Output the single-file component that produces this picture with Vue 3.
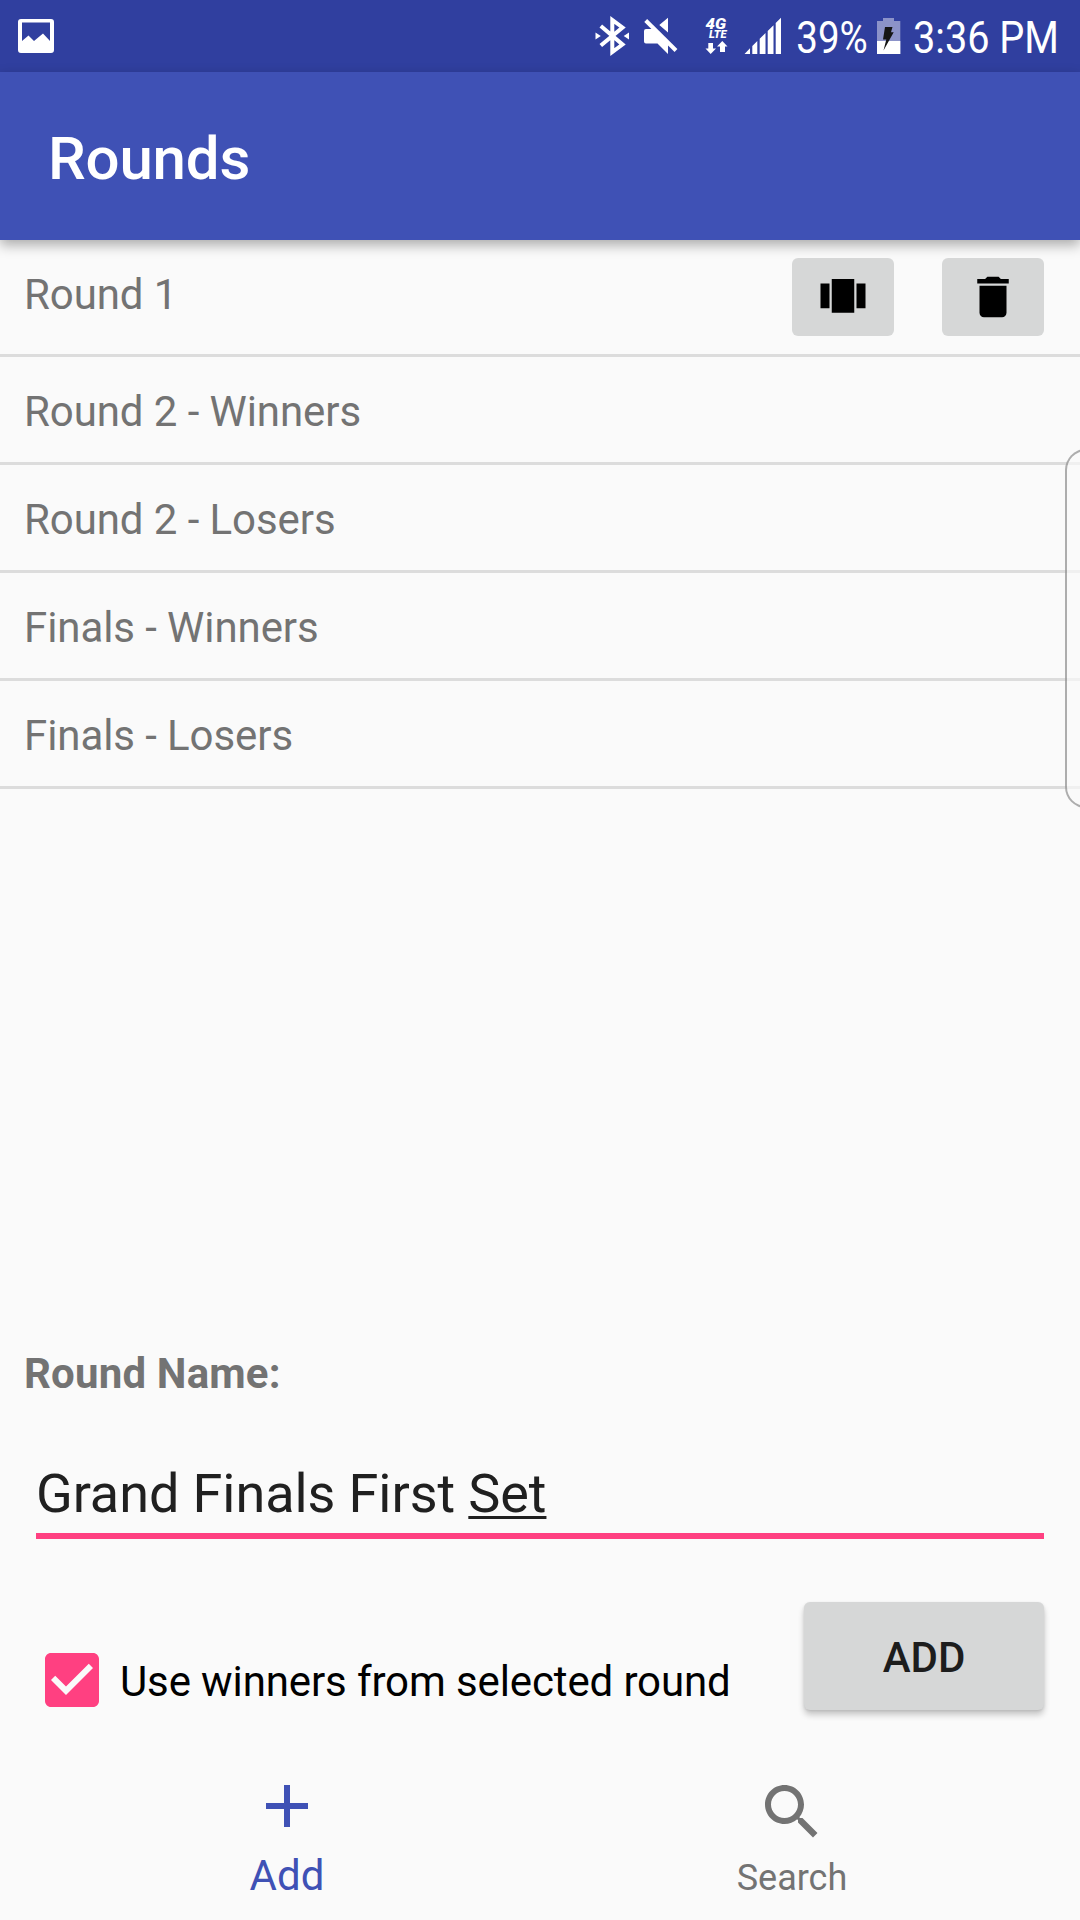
<script setup>
import { ref } from 'vue'

const rounds = [
  'Round 1',
  'Round 2 - Winners',
  'Round 2 - Losers',
  'Finals - Winners',
  'Finals - Losers',
]
const selected = ref(0)
</script>

<template>
  <div class="screen">
    <header class="status">
      <svg width="54" height="72" viewBox="0 0 54 72">
        <path fill="#fff" fill-rule="evenodd" d="M21 19H51Q54 19 54 22V50Q54 53 51 53H21Q18 53 18 50V22Q18 19 21 19ZM22 22.5V41L28.5 35.5L34 41L43 33.5L50 41V22.5Z" />
      </svg>
      <svg width="500" height="72" viewBox="580 0 500 72">
        <g fill="none" stroke="#fff" stroke-width="4">
          <path d="M600.8 26L622.5 44.5L612.3 52V20L622.5 27.5L600.8 45.5" />
        </g>
        <path fill="#fff" d="M595.5 32.5L600.8 36L595.5 39.5ZM629 32.5L623.7 36L629 39.5Z" />
        <path fill="#fff" d="M668 17.7V32.5L659.3 25ZM646 29H654.5L668 42.5V54L657.5 43.5H646Q644 43.5 644 41.5V31Q644 29 646 29Z" />
        <path stroke="#303f9f" stroke-width="3" d="M648.5 18L678 47.5" />
        <path stroke="#fff" stroke-width="4" d="M645.7 20.5L676 50.5" />
        <text x="705.5" y="29" class="net" font-size="14.5" textLength="20.5" lengthAdjust="spacingAndGlyphs">4G</text>
        <text x="709" y="38.2" class="net" font-size="10.5" textLength="17.5" lengthAdjust="spacingAndGlyphs">LTE</text>
        <path fill="#fff" d="M708.3 43H713V48.5H716L710.7 54L705.5 48.5H708.3ZM720 52H725V46.5H727.5L722.3 41L717 46.5H720Z" />
        <path fill="#fff" d="M744.5 54L750 48.3V54ZM752.3 54V46L757.3 41V54ZM759.7 54V38.7L765.5 33V54ZM767.7 54V31L773.5 25.2V54ZM775.7 54V23L781 17.7V54Z" />
        <text x="796.3" y="53" class="status-text" textLength="71.5" lengthAdjust="spacingAndGlyphs">39%</text>
        <path fill="#8c93c9" d="M883 18H894V21H900.3V54H877V21H883Z" />
        <path fill="#fff" d="M877 41H900.3V54H877Z" />
        <path fill="#151515" d="M885 27H892.5L891 32.3H893.7L883.5 50.5L886.3 39.5H883Z" />
        <text x="913" y="53" class="status-text" textLength="146" lengthAdjust="spacingAndGlyphs">3:36 PM</text>
      </svg>
    </header>

    <div class="appbar"><h1>Rounds</h1></div>

    <ul class="list">
      <li v-for="(name, i) in rounds" :key="name" :class="{ selected: i === selected }" @click="selected = i">
        <span>{{ name }}</span>
        <div v-if="i === selected" class="actions">
          <button aria-label="Matches">
            <svg width="54" height="54" viewBox="0 0 24 24"><path d="M7 19h10V4H7v15zm-5-2h4V6H2v11zM18 6v11h4V6h-4z" /></svg>
          </button>
          <button aria-label="Delete">
            <svg width="54" height="54" viewBox="0 0 24 24"><path d="M6 19c0 1.1.9 2 2 2h8c1.1 0 2-.9 2-2V7H6v12zM19 4h-3.5l-1-1h-5l-1 1H5v2h14V4z" /></svg>
          </button>
        </div>
      </li>
    </ul>

    <section class="form">
      <div class="label">Round Name:</div>
      <div class="field">Grand Finals First <span class="composing">Set</span></div>
      <div class="row">
        <label class="check">
          <svg width="54" height="54" viewBox="3 3 18 18"><path fill="#ff4081" d="M19 3H5c-1.11 0-2 .9-2 2v14c0 1.1.89 2 2 2h14c1.11 0 2-.9 2-2V5c0-1.1-.89-2-2-2zm-9 14l-5-5 1.41-1.41L10 14.17l7.59-7.59L19 8l-9 9z" /></svg>
          <span>Use winners from selected round</span>
        </label>
        <button class="add">ADD</button>
      </div>
    </section>

    <nav class="tabs">
      <div class="tab active">
        <svg width="72" height="72" viewBox="0 0 24 24"><path fill="currentColor" d="M19 13h-6v6h-2v-6H5v-2h6V5h2v6h6v2z" /></svg>
        <span>Add</span>
      </div>
      <div class="tab">
        <svg width="72" height="72" viewBox="0 0 24 24"><path fill="currentColor" d="M15.5 14h-.79l-.28-.27C15.41 12.59 16 11.11 16 9.5 16 5.91 13.09 3 9.5 3S3 5.91 3 9.5 5.91 16 9.5 16c1.61 0 3.09-.59 4.23-1.57l.27.28v.79l5 4.99L20.49 19l-4.99-5zm-6 0C7.01 14 5 11.99 5 9.5S7.01 5 9.5 5 14 7.01 14 9.5 11.99 14 9.5 14z" /></svg>
        <span>Search</span>
      </div>
    </nav>

    <div class="edge-panel"></div>
  </div>
</template>

<style>
body { background: #fafafa; }
</style>

<style scoped>
.screen {
  position: relative;
  width: 1080px;
  height: 1920px;
  overflow: hidden;
  display: flex;
  flex-direction: column;
  background: #fafafa;
  color: #737373;
  font-family: Roboto, "Liberation Sans", sans-serif;
  font-size: 42px;
  line-height: 49px;
}
svg { display: block; flex: none; }
button {
  border: 0;
  padding: 0;
  border-radius: 6px;
  background: #d6d7d7;
  font: inherit;
}
.status {
  height: 72px;
  flex: none;
  display: flex;
  justify-content: space-between;
  background: #303f9f;
}
.status-text { fill: #fff; font-size: 45px; }
.net { fill: #fff; font-weight: 900; font-style: italic; }
.appbar {
  height: 168px;
  flex: none;
  box-sizing: border-box;
  padding: 52px 48px 0;
  background: #3f51b5;
  box-shadow: 0 5px 12px rgba(0, 0, 0, 0.32);
}
.appbar h1 {
  margin: 0;
  color: #fff;
  font-size: 60px;
  line-height: 70px;
  font-weight: 500;
  letter-spacing: -0.2px;
}
.list { margin: 0; padding: 0; list-style: none; letter-spacing: -0.08px; }
.list li {
  height: 108px;
  box-sizing: border-box;
  display: flex;
  justify-content: space-between;
  align-items: flex-start;
  padding: 30px 36px 0 24px;
  border-bottom: 3px solid #dcdcdc;
}
.list li.selected { height: 117px; }
.actions { display: flex; gap: 48px; margin-top: -12px; }
.actions button {
  width: 102px;
  height: 78px;
  display: flex;
  align-items: center;
  justify-content: center;
}
.form { margin-top: auto; height: 421px; flex: none; }
.label { padding-left: 24px; font-weight: 700; letter-spacing: 0.18px; }
.field {
  margin: 64px 36px 0;
  height: 71px;
  border-bottom: 6px solid #ff4081;
  color: #202020;
  font-size: 54px;
  line-height: 63px;
  letter-spacing: -0.08px;
}
.composing {
  text-decoration: underline;
  text-decoration-thickness: 3px;
  text-decoration-skip-ink: none;
  text-underline-offset: 4px;
}
.row {
  display: flex;
  justify-content: space-between;
  align-items: flex-start;
  margin: 63px 36px 0 45px;
}
.check { display: flex; gap: 21px; margin-top: 51px; color: #000; letter-spacing: -0.12px; }
.check span { margin-top: 4px; }
.add {
  width: 240px;
  height: 108px;
  padding-top: 2px;
  color: #1d1d1d;
  font-weight: 500;
  box-shadow: 0 5px 6px rgba(0, 0, 0, 0.2), 0 1px 3px rgba(0, 0, 0, 0.1);
}
.tabs {
  height: 150px;
  flex: none;
  display: flex;
  gap: 2px;
  padding: 0 36px;
}
.tab {
  width: 504px;
  display: flex;
  flex-direction: column;
  align-items: center;
  padding-top: 6px;
  font-size: 36px;
}
.tab span { margin-top: 6px; }
.tab.active { width: 502px; padding-top: 0; color: #3f51b5; font-size: 42px; }
.tab.active span { margin-top: 9px; }
.edge-panel {
  position: absolute;
  left: 1065px;
  top: 449px;
  width: 60px;
  height: 359px;
  box-sizing: border-box;
  border: 2px solid rgba(0, 0, 0, 0.31);
  border-radius: 21px;
  background: rgba(250, 250, 250, 0.66);
}
</style>
